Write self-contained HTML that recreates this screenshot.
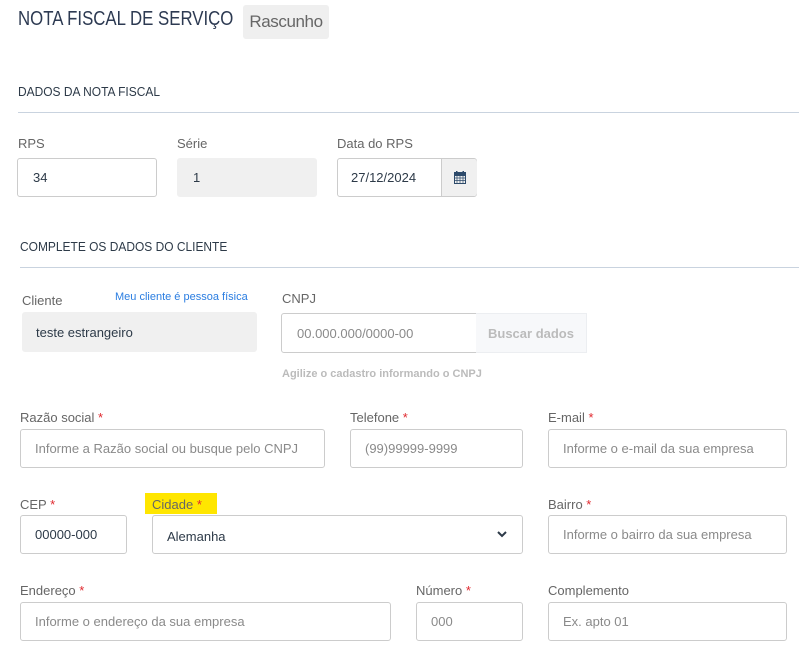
<!DOCTYPE html>
<html><head><meta charset="utf-8"><style>
body{margin:0;width:799px;height:658px;background:#fff;font-family:"Liberation Sans",sans-serif;position:relative;overflow:hidden}
.a{position:absolute}
.l{position:absolute;font-size:13px;color:#666}
.r{color:#e0282e}
.i{position:absolute;box-sizing:border-box;border:1px solid #ccc;border-radius:3px;font-size:13px;color:#2d3a48;padding-left:15px;display:flex;align-items:center;background:#fff}
.p{color:#8a8a8a}
.g{background:#f0f0f0;border-color:#f0f0f0}
.h{position:absolute;font-size:13px;color:#2d3a48;transform:scaleX(.92);transform-origin:left}
.line{position:absolute;height:1px;background:#c9d3df}
</style></head><body>
<div class="a" style="left:18px;top:8px;font-size:20px;color:#2d3a52;white-space:nowrap;transform:scaleX(.84);transform-origin:left">NOTA FISCAL DE SERVIÇO</div>
<div class="a" style="left:243px;top:5px;width:86px;height:34px;background:#efefef;border-radius:3px;font-size:17px;color:#666;display:flex;align-items:center;justify-content:center;letter-spacing:-0.4px">Rascunho</div>
<div class="h" style="left:18px;top:84px">DADOS DA NOTA FISCAL</div>
<div class="line" style="left:18px;top:112px;width:781px"></div>
<div class="l" style="left:18px;top:136px">RPS</div>
<div class="l" style="left:177px;top:136px">Série</div>
<div class="l" style="left:337px;top:136px">Data do RPS</div>
<div class="i" style="left:17px;top:158px;width:140px;height:39px">34</div>
<div class="i g" style="left:177px;top:158px;width:140px;height:39px">1</div>
<div class="i" style="left:337px;top:158px;width:140px;height:39px;padding-left:13px">27/12/2024</div>
<div class="a" style="left:441px;top:159px;width:35px;height:37px;background:#f0f0f0;border-left:1px solid #ccc;border-radius:0 3px 3px 0">
<svg class="a" style="left:12px;top:12px" width="12" height="13" viewBox="0 0 12 13"><rect x="0" y="1" width="12" height="3" fill="#2d4a6a"/><rect x="2" y="0" width="1.5" height="2" fill="#2d4a6a"/><rect x="8.5" y="0" width="1.5" height="2" fill="#2d4a6a"/><rect x="0.5" y="4.5" width="11" height="8" fill="none" stroke="#2d4a6a"/><path d="M0 7h12M0 9.5h12M3 4v9M6 4v9M9 4v9" stroke="#2d4a6a" stroke-width=".7"/></svg></div>
<div class="h" style="left:20px;top:239px">COMPLETE OS DADOS DO CLIENTE</div>
<div class="line" style="left:20px;top:267px;width:779px"></div>
<div class="l" style="left:22px;top:293px">Cliente</div>
<div class="a" style="left:115px;top:291px;font-size:11px;color:#2a7de1">Meu cliente é pessoa física</div>
<div class="l" style="left:282px;top:291px">CNPJ</div>
<div class="i g" style="left:22px;top:312px;width:235px;height:40px;padding-left:13px">teste estrangeiro</div>
<div class="i p" style="left:281px;top:313px;width:196px;height:40px;border-radius:3px 0 0 3px">00.000.000/0000-00</div>
<div class="a" style="left:476px;top:313px;width:111px;height:40px;box-sizing:border-box;border:1px solid #eceef1;border-left:none;background:#f7f8fa;font-size:13px;font-weight:bold;color:#bbb;display:flex;align-items:center;justify-content:center">Buscar dados</div>
<div class="a" style="left:282px;top:368px;font-size:11px;font-weight:bold;color:#bbb">Agilize o cadastro informando o CNPJ</div>
<div class="l" style="left:20px;top:410px">Razão social <span class="r">*</span></div>
<div class="l" style="left:350px;top:410px">Telefone <span class="r">*</span></div>
<div class="l" style="left:548px;top:410px">E-mail <span class="r">*</span></div>
<div class="i p" style="left:20px;top:429px;width:305px;height:39px;padding-left:14px">Informe a Razão social ou busque pelo CNPJ</div>
<div class="i p" style="left:350px;top:429px;width:173px;height:39px;padding-left:14px">(99)99999-9999</div>
<div class="i p" style="left:548px;top:429px;width:239px;height:39px;padding-left:14px">Informe o e-mail da sua empresa</div>
<div class="l" style="left:20px;top:497px">CEP <span class="r">*</span></div>
<div class="a" style="left:145px;top:493px;width:72px;height:21px;background:#ffe600"></div>
<div class="l" style="left:152px;top:497px">Cidade <span class="r">*</span></div>
<div class="l" style="left:548px;top:497px">Bairro <span class="r">*</span></div>
<div class="i" style="left:20px;top:515px;width:107px;height:39px;padding-left:14px">00000-000</div>
<div class="i" style="left:152px;top:515px;width:371px;height:39px;padding-left:14px;padding-top:4px">Alemanha</div>
<svg class="a" style="left:497px;top:531px" width="10" height="7" viewBox="0 0 10 7"><path d="M1 1l4 4 4-4" fill="none" stroke="#2d3a48" stroke-width="2"/></svg>
<div class="i p" style="left:548px;top:515px;width:239px;height:39px;padding-left:14px">Informe o bairro da sua empresa</div>
<div class="l" style="left:20px;top:583px">Endereço <span class="r">*</span></div>
<div class="l" style="left:416px;top:583px">Número <span class="r">*</span></div>
<div class="l" style="left:548px;top:583px">Complemento</div>
<div class="i p" style="left:20px;top:602px;width:371px;height:39px;padding-left:14px">Informe o endereço da sua empresa</div>
<div class="i p" style="left:416px;top:602px;width:107px;height:39px;padding-left:14px">000</div>
<div class="i p" style="left:548px;top:602px;width:239px;height:39px;padding-left:14px">Ex. apto 01</div>
</body></html>
